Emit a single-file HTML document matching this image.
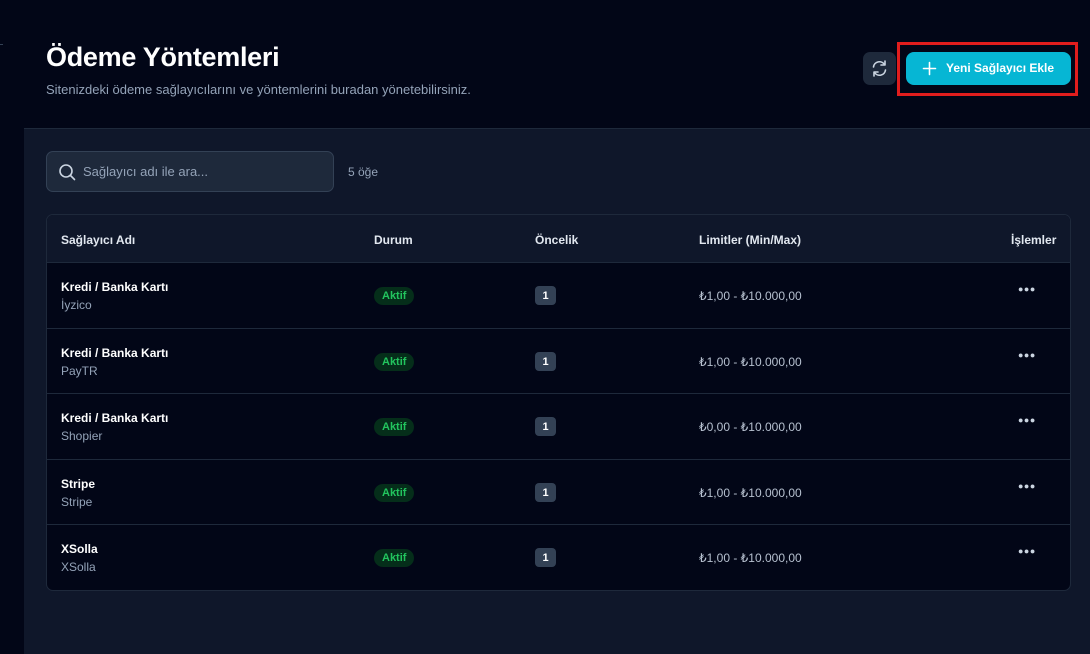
<!DOCTYPE html>
<html><head><meta charset="utf-8"><style>
*{box-sizing:border-box;margin:0;padding:0}
body{width:1090px;height:654px;overflow:hidden;background:#020617;font-family:"Liberation Sans",sans-serif;color:#fff;position:relative}
.abs{position:absolute}
h1{position:absolute;left:46px;top:42px;font-size:27px;font-weight:700;letter-spacing:-0.3px}
.sub{left:46px;top:82px;font-size:13px;color:#94a3b8}
.panel{left:24px;top:128px;right:0;bottom:0;background:#0f172a;border-top:1px solid #1e293b}
.search{left:46px;top:151px;width:288px;height:41px;background:#1e293b;border:1px solid #334155;border-radius:7px}
.search span{position:absolute;left:36px;top:12px;font-size:13px;color:#94a3b8}
.count{left:348px;top:165px;font-size:12px;color:#94a3b8}
.table{left:46px;top:214px;width:1025px;height:377px;border:1px solid #1e293b;border-radius:7px;overflow:hidden;background:#020617}
.hdr{height:48px;background:#0f172a;border-bottom:1px solid #1e293b;position:relative;font-size:12px;font-weight:700;color:#e2e8f0}
.row{height:65.6px;border-bottom:1px solid #1e293b;position:relative}
.row:last-child{border-bottom:none}
.c{position:absolute}
.name{left:14px;top:17px;font-size:12px;font-weight:700}
.prov{left:14px;top:35px;font-size:12px;color:#94a3b8}
.badge{left:327px;top:24px;height:18px;padding:0 8px;border-radius:9px;background:#052e1a;color:#22c55e;font-size:11px;font-weight:700;line-height:19px}
.pr{left:488px;top:23px;width:21px;height:19px;border-radius:4px;background:#334155;font-size:11px;font-weight:700;line-height:20px;text-align:center}
.lim{left:652px;top:26px;font-size:12px;color:#b6c0cf}
.dots{left:971px;top:21px;font-size:9px;color:#cbd5e1;letter-spacing:0.5px}
</style></head><body>
<div class="abs" style="left:0;top:44px;width:3px;height:1px;background:#334155"></div>
<h1>Ödeme Yöntemleri</h1>
<div class="abs sub">Sitenizdeki ödeme sağlayıcılarını ve yöntemlerini buradan yönetebilirsiniz.</div>
<div class="abs" style="left:863px;top:52px;width:33px;height:33px;border-radius:7px;background:#1e293b">
<svg width="33" height="33" viewBox="0 0 33 33" fill="none" stroke="#cbd5e1" stroke-width="1.6" stroke-linecap="round" stroke-linejoin="round"><path d="M10.5 15a6 6 0 0 1 11-2.5M22.5 18a6 6 0 0 1-11 2.5"/><path d="M22 9v4h-4M11 24v-4h4"/></svg></div>
<div class="abs" style="left:897px;top:42px;width:181px;height:54px;border:3px solid #e11d1d"></div>
<div class="abs" style="left:906px;top:52px;width:165px;height:33px;border-radius:8px;background:#06b6d4;font-size:12px;font-weight:700;line-height:33px">
<svg class="abs" style="left:16px;top:9px" width="15" height="15" viewBox="0 0 15 15" stroke="#fff" stroke-width="1.6" stroke-linecap="round"><path d="M7.5 1.5v12M1.5 7.5h12"/></svg>
<span class="abs" style="left:40px">Yeni Sağlayıcı Ekle</span></div>
<div class="abs panel"></div>
<div class="abs search"><svg class="abs" style="left:11px;top:11px" width="18" height="18" viewBox="0 0 18 18" fill="none" stroke="#cbd5e1" stroke-width="1.6" stroke-linecap="round"><circle cx="8" cy="8" r="6"/><path d="M12.5 12.5l4 4"/></svg><span>Sağlayıcı adı ile ara...</span></div>
<div class="abs count">5 öğe</div>
<div class="abs table">
<div class="hdr"><span class="c" style="left:14px;top:18px">Sağlayıcı Adı</span><span class="c" style="left:327px;top:18px">Durum</span><span class="c" style="left:488px;top:18px">Öncelik</span><span class="c" style="left:652px;top:18px">Limitler (Min/Max)</span><span class="c" style="left:964px;top:18px">İşlemler</span></div>
<div class="row"><div class="c name">Kredi / Banka Kartı</div><div class="c prov">İyzico</div><div class="c badge">Aktif</div><div class="c pr">1</div><div class="c lim">₺1,00 - ₺10.000,00</div><div class="c dots">●●●</div></div>
<div class="row"><div class="c name">Kredi / Banka Kartı</div><div class="c prov">PayTR</div><div class="c badge">Aktif</div><div class="c pr">1</div><div class="c lim">₺1,00 - ₺10.000,00</div><div class="c dots">●●●</div></div>
<div class="row"><div class="c name">Kredi / Banka Kartı</div><div class="c prov">Shopier</div><div class="c badge">Aktif</div><div class="c pr">1</div><div class="c lim">₺0,00 - ₺10.000,00</div><div class="c dots">●●●</div></div>
<div class="row"><div class="c name">Stripe</div><div class="c prov">Stripe</div><div class="c badge">Aktif</div><div class="c pr">1</div><div class="c lim">₺1,00 - ₺10.000,00</div><div class="c dots">●●●</div></div>
<div class="row"><div class="c name">XSolla</div><div class="c prov">XSolla</div><div class="c badge">Aktif</div><div class="c pr">1</div><div class="c lim">₺1,00 - ₺10.000,00</div><div class="c dots">●●●</div></div>
</div>
</body></html>
